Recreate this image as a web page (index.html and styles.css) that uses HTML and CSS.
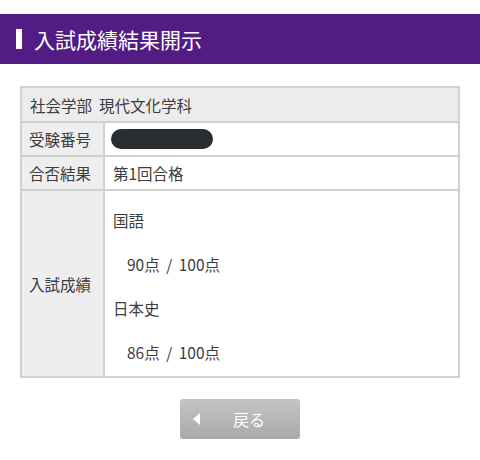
FILE: index.html
```html
<!DOCTYPE html>
<html lang="ja">
<head>
<meta charset="utf-8">
<link rel="stylesheet" href="styles.css">
</head>
<body>
<header class="title-bar">
  <span class="mark"></span>
  <h1 class="title">入試成績結果開示</h1>
</header>
<main class="content">
  <table class="result">
    <tr>
      <th class="head" colspan="2">社会学部&nbsp; 現代文化学科</th>
    </tr>
    <tr>
      <th class="label">受験番号</th>
      <td class="value"><span class="redact"></span></td>
    </tr>
    <tr>
      <th class="label">合否結果</th>
      <td class="value">第1回合格</td>
    </tr>
    <tr>
      <th class="label">入試成績</th>
      <td class="value scores">
        <div class="line">国語</div>
        <div class="line score">90点 / 100点</div>
        <div class="line">日本史</div>
        <div class="line score">86点 / 100点</div>
      </td>
    </tr>
  </table>
  <div class="actions">
    <button class="back"><span class="tri"></span><span class="back-text">戻る</span></button>
  </div>
</main>
</body>
</html>
```

FILE: styles.css
```css
html, body {
  margin: 0;
  padding: 0;
  background: #ffffff;
  font-family: "Noto Sans CJK JP", "Noto Sans", sans-serif;
}

.title-bar {
  margin-top: 14px;
  height: 50px;
  background: #531b84;
  display: flex;
  align-items: center;
  padding-left: 16px;
  box-sizing: border-box;
}

.mark {
  width: 6px;
  height: 20px;
  background: #ffffff;
  margin-right: 12px;
}

.title {
  margin: 0;
  color: #ffffff;
  font-size: 21px;
  font-weight: normal;
  line-height: 1;
}

.content {
  padding: 22px 20px 0 20px;
}

.result {
  width: 440px;
  border-collapse: collapse;
  border: 2px solid #d0d0d0;
  font-size: 15.5px;
  color: #3c3c3c;
}

.result th,
.result td {
  border: 2px solid #d0d0d0;
  font-weight: normal;
  text-align: left;
  padding: 0;
}

.head {
  background: #ececec;
  height: 33px;
  padding-left: 8px !important;
}

.label {
  background: #eeeeee;
  width: 74px;
  height: 32px;
  padding-left: 7px !important;
  white-space: nowrap;
}

.value {
  background: #ffffff;
  padding-left: 8px !important;
}

.redact {
  display: block;
  width: 102px;
  height: 20px;
  border-radius: 10px;
  background: #2a2d31;
  margin-left: -2px;
}

.scores {
  padding-top: 7px !important;
  padding-bottom: 2px !important;
}

.line {
  height: 44px;
  line-height: 44px;
}

.score {
  padding-left: 14px;
  white-space: pre;
  word-spacing: 3px;
}

.actions {
  display: flex;
  justify-content: center;
  padding-top: 21px;
}

.back {
  width: 120px;
  height: 40px;
  border: none;
  border-radius: 3px;
  background: linear-gradient(#c4c4c4, #a9a9a9);
  display: flex;
  align-items: center;
  padding: 0 0 0 13px;
  font-family: inherit;
  cursor: pointer;
}

.tri {
  width: 0;
  height: 0;
  border-top: 6px solid transparent;
  border-bottom: 6px solid transparent;
  border-right: 7px solid #ffffff;
}

.back-text {
  color: #ffffff;
  font-size: 16px;
  margin-left: 33px;
}
```
